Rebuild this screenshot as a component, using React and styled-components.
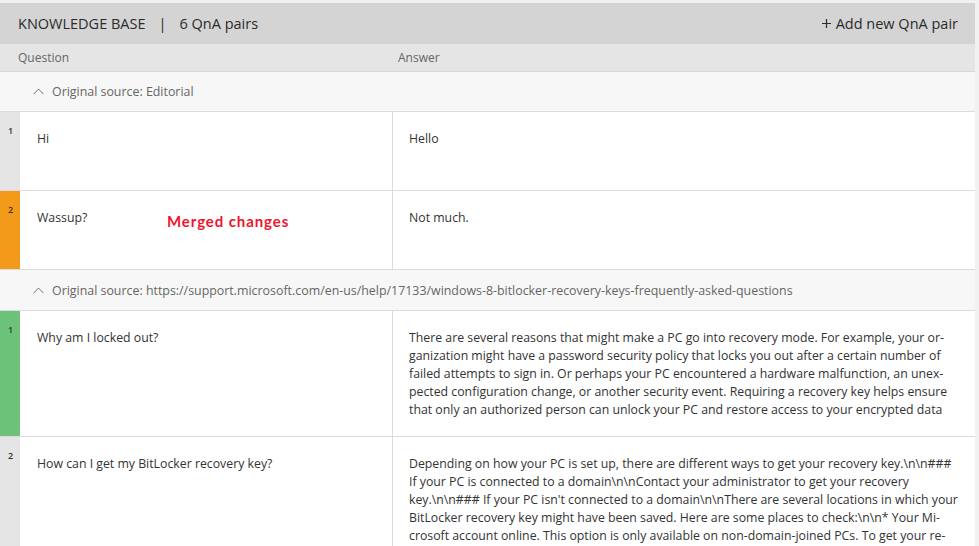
import React from "react";
import styled, { createGlobalStyle } from "styled-components";

const Global = createGlobalStyle`
  html, body { margin: 0; padding: 0; background: #f1f1f1; }
  body { font-family: "Open Sans", "Noto Sans", sans-serif; color: #333; overflow: hidden; }
  * { box-sizing: border-box; }
`;

const Page = styled.div`
  width: 975px;
  height: 543px;
  margin-top: 3px;
  background: #fff;
  overflow: hidden;
`;

const TopBar = styled.div`
  height: 41px;
  background: #d4d4d4;
  display: flex;
  align-items: center;
  justify-content: space-between;
  padding: 0 17px 0 18px;
  font-size: 14.5px;
  color: #2b2b2b;
`;

const Title = styled.div`
  display: flex;
  gap: 13px;
`;

const AddButton = styled.div`
  display: flex;
  align-items: center;
  gap: 5px;
`;

const ColHeader = styled.div`
  height: 28px;
  background: #e5e5e5;
  border-bottom: 1px solid #d6d6d6;
  display: grid;
  grid-template-columns: 380px 1fr;
  align-items: center;
  padding-left: 18px;
  font-size: 12px;
  color: #666;
`;

const GroupRow = styled.div`
  height: ${(p) => p.$h}px;
  background: #f7f7f7;
  border-bottom: 1px solid #dcdcdc;
  display: flex;
  align-items: center;
  padding-left: 33px;
  gap: 8px;
  font-size: 12.4px;
  color: #666;
  white-space: nowrap;
`;

const Row = styled.div`
  position: relative;
  display: grid;
  grid-template-columns: 20px 373px 1fr;
  height: ${(p) => p.$h}px;
  border-bottom: 1px solid #dcdcdc;
`;

const Num = styled.div`
  background: ${(p) => p.$c};
  font-size: 9px;
  font-weight: 600;
  color: #333;
  padding: 12px 0 0 8px;
`;

const Question = styled.div`
  border-right: 1px solid #dcdcdc;
  padding: 18px 0 0 17px;
  font-size: 12.3px;
  line-height: 18px;
  color: #333;
`;

const Answer = styled.div`
  padding: 18px 0 0 16px;
  font-size: 12.3px;
  line-height: 18px;
  color: #333;
`;

const Line = styled.span`
  display: block;
  white-space: nowrap;
`;

const Annotation = styled.div`
  position: absolute;
  left: 167px;
  top: 21px;
  font-family: "Lato", "Open Sans", sans-serif;
  font-weight: 700;
  font-size: 15px;
  color: #f0142c;
  letter-spacing: 0.9px;
`;

const Chevron = () => (
  <svg width="11" height="7" viewBox="0 0 11 7" fill="none">
    <path d="M0.5 6.2 L5.5 1 L10.5 6.2" stroke="#777" strokeWidth="1" />
  </svg>
);

const Plus = () => (
  <svg width="9" height="9" viewBox="0 0 9 9">
    <path d="M4.5 0 V9 M0 4.5 H9" stroke="#2b2b2b" strokeWidth="1.2" />
  </svg>
);

const rows = [
  { type: "group", h: 40, text: "Original source: Editorial" },
  { type: "qa", h: 79, n: 1, c: "#e5e5e5", q: "Hi", a: ["Hello"] },
  { type: "qa", h: 79, n: 2, c: "#f39a1b", q: "Wassup?", a: ["Not much."], note: "Merged changes" },
  {
    type: "group",
    h: 41,
    text: "Original source: https://support.microsoft.com/en-us/help/17133/windows-8-bitlocker-recovery-keys-frequently-asked-questions",
  },
  {
    type: "qa",
    h: 126,
    n: 1,
    c: "#6dc27a",
    q: "Why am I locked out?",
    a: [
      "There are several reasons that might make a PC go into recovery mode. For example, your or-",
      "ganization might have a password security policy that locks you out after a certain number of",
      "failed attempts to sign in. Or perhaps your PC encountered a hardware malfunction, an unex-",
      "pected configuration change, or another security event. Requiring a recovery key helps ensure",
      "that only an authorized person can unlock your PC and restore access to your encrypted data",
    ],
  },
  {
    type: "qa",
    h: 140,
    n: 2,
    c: "#e5e5e5",
    q: "How can I get my BitLocker recovery key?",
    a: [
      "Depending on how your PC is set up, there are different ways to get your recovery key.\\n\\n###",
      "If your PC is connected to a domain\\n\\nContact your administrator to get your recovery",
      "key.\\n\\n### If your PC isn't connected to a domain\\n\\nThere are several locations in which your",
      "BitLocker recovery key might have been saved. Here are some places to check:\\n\\n* Your Mi-",
      "crosoft account online. This option is only available on non-domain-joined PCs. To get your re-",
    ],
  },
];

export default function App() {
  return (
    <>
      <Global />
      <Page>
        <TopBar>
          <Title>
            <span>KNOWLEDGE BASE</span>
            <span>|</span>
            <span>6 QnA pairs</span>
          </Title>
          <AddButton>
            <Plus />
            <span>Add new QnA pair</span>
          </AddButton>
        </TopBar>
        <ColHeader>
          <span>Question</span>
          <span>Answer</span>
        </ColHeader>
        {rows.map((r, i) =>
          r.type === "group" ? (
            <GroupRow key={i} $h={r.h}>
              <Chevron />
              <span>{r.text}</span>
            </GroupRow>
          ) : (
            <Row key={i} $h={r.h}>
              <Num $c={r.c}>{r.n}</Num>
              <Question>{r.q}</Question>
              <Answer>
                {r.a.map((l, j) => (
                  <Line key={j}>{l}</Line>
                ))}
              </Answer>
              {r.note && <Annotation>{r.note}</Annotation>}
            </Row>
          )
        )}
      </Page>
    </>
  );
}
